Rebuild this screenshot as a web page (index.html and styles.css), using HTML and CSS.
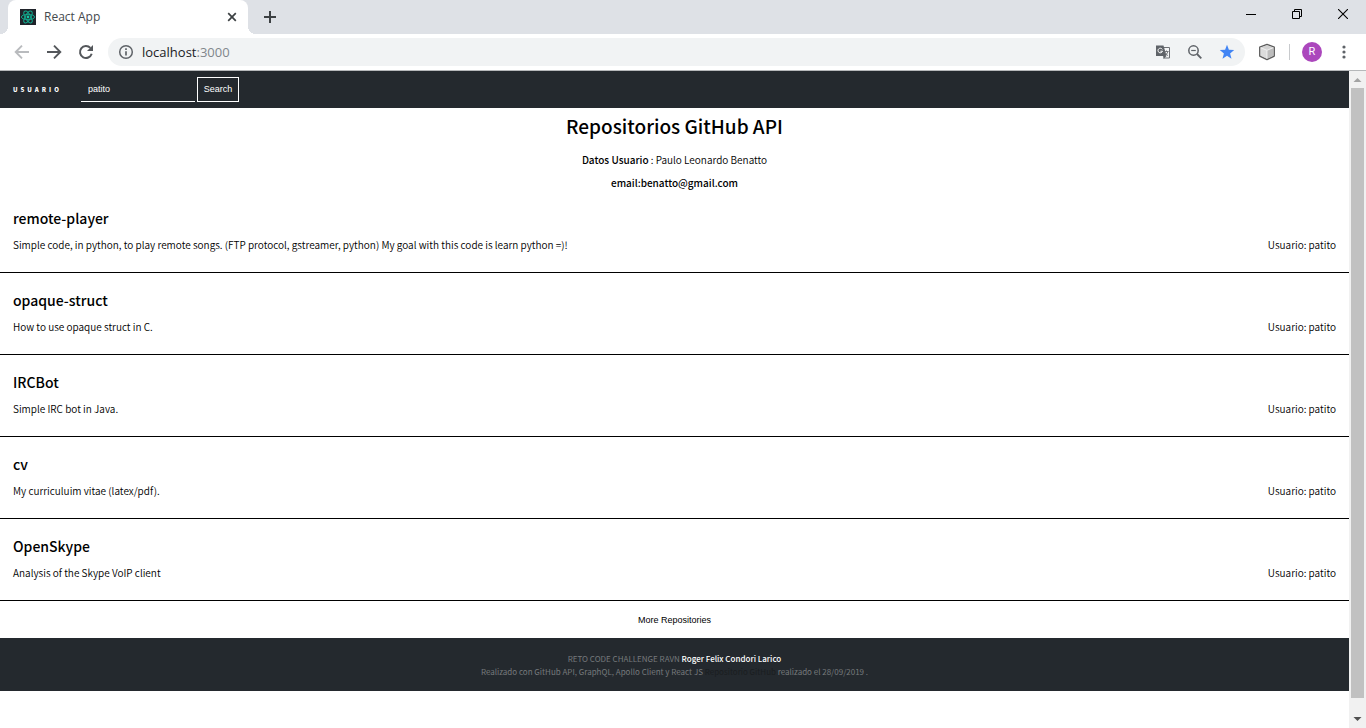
FILE: index.html
```html
<!DOCTYPE html>
<html lang="es">
<head>
<meta charset="utf-8">
<title>React App</title>
<link rel="stylesheet" href="styles.css">
</head>
<body>
<div class="browser">
  <div class="tab-strip">
    <div class="tab">
      <svg class="favicon" width="16" height="16" viewBox="0 0 16 16"><rect width="16" height="16" fill="#20232a"/><g fill="none" stroke="#12a88c" stroke-width="1"><ellipse cx="8" cy="8" rx="6.6" ry="2.7"/><ellipse cx="8" cy="8" rx="6.6" ry="2.7" transform="rotate(60 8 8)"/><ellipse cx="8" cy="8" rx="6.6" ry="2.7" transform="rotate(120 8 8)"/></g><circle cx="8" cy="8" r="1.4" fill="#14c9a5"/></svg>
      <span class="tab-title">React App</span>
      <button class="icon-button" aria-label="Close tab"><svg width="10" height="10" viewBox="0 0 10 10"><path d="M1.2 1.2l7.6 7.6M8.8 1.2L1.2 8.8" stroke="#3c4043" stroke-width="1.7"/></svg></button>
    </div>
    <button class="icon-button new-tab" aria-label="New tab"><svg width="12" height="12" viewBox="0 0 12 12"><path d="M6 0v12M0 6h12" stroke="#3c4043" stroke-width="2"/></svg></button>
    <div class="window-controls">
      <button class="icon-button" aria-label="Minimize"><svg width="10" height="10" viewBox="0 0 10 10"><path d="M0 5.5h10" stroke="#000"/></svg></button>
      <button class="icon-button" aria-label="Restore"><svg width="10" height="10" viewBox="0 0 10 10"><path d="M.5 2.5h7v7h-7zM2.5 2.5v-2h7v7h-2" fill="none" stroke="#000"/></svg></button>
      <button class="icon-button" aria-label="Close"><svg width="10" height="10" viewBox="0 0 10 10"><path d="M0 0l10 10M10 0L0 10" stroke="#000" stroke-width="1.1"/></svg></button>
    </div>
  </div>
  <div class="toolbar">
    <div class="nav-buttons">
      <button class="icon-button" aria-label="Back"><svg width="16" height="16" viewBox="0 0 16 16"><path d="M15 8H2.5M8 1.7L1.7 8 8 14.3" fill="none" stroke="#b9bbbe" stroke-width="1.9"/></svg></button>
      <button class="icon-button" aria-label="Forward"><svg width="16" height="16" viewBox="0 0 16 16"><path d="M1 8h12.500M8 1.700L14.300 8 8 14.300" fill="none" stroke="#54575b" stroke-width="1.900"/></svg></button>
      <button class="icon-button" aria-label="Reload"><svg width="16" height="16" viewBox="0 0 16 16"><path d="M13.700 9.800A6 6 0 1 1 12.400 3.900" fill="none" stroke="#54575b" stroke-width="2"/><path d="M15 1v6H9z" fill="#54575b"/></svg></button>
    </div>
    <div class="omnibox">
      <svg width="16" height="16" viewBox="0 0 16 16"><circle cx="8" cy="8" r="6.300" fill="none" stroke="#5f6368" stroke-width="1.500"/><path d="M8 7.200v4.300M8 4.300v1.700" stroke="#5f6368" stroke-width="1.700"/></svg>
      <span class="address">localhost<span class="port">:3000</span></span>
      <button class="icon-button" aria-label="Translate"><svg width="16" height="16" viewBox="0 0 16 16"><path d="M7 3.500h7.500v10.500H8" fill="#f4f5f6" stroke="#6d7074" stroke-width="1"/><path d="M1 1.500h7.500L11.500 12H1z" fill="#5f6368"/><path d="M7.300 5.400A2.300 2.300 0 1 0 7.500 7.200H5.400" fill="none" stroke="#fff" stroke-width="1"/><path d="M9.500 7.500h4M11.500 6.500v1M13 7.500q-.7 2.300-3 4.500M10.300 8.500q1 2 2.800 3.300" stroke="#6d7074" fill="none" stroke-width=".9"/><path d="M8 12h3.500L9 14.500z" fill="#5f6368"/></svg></button>
      <button class="icon-button" aria-label="Zoom"><svg width="16" height="16" viewBox="0 0 16 16"><circle cx="6.500" cy="6.500" r="4.700" fill="none" stroke="#5f6368" stroke-width="1.500"/><path d="M10 10l4.300 4.300" stroke="#5f6368" stroke-width="1.800"/><path d="M4.200 6.500h4.600" stroke="#5f6368" stroke-width="1.200"/></svg></button>
      <button class="icon-button" aria-label="Bookmark"><svg width="16" height="16" viewBox="0 0 16 16"><path d="M8 .8l1.900 5 5.300.3-4.100 3.400 1.400 5.300L8 11.800l-4.500 3 1.400-5.300L.8 6.100l5.300-.3z" fill="#4285f4"/></svg></button>
    </div>
    <button class="icon-button" aria-label="Extension"><svg width="18" height="18" viewBox="0 0 18 18"><path d="M9 1.300l7.300 2.800v9L9 16.700l-7.300-3.600v-9z" fill="#d8d8d8" stroke="#5c5c5c" stroke-width="1.300" stroke-linejoin="round"/><path d="M2.700 4.700L9 7.300v8.400l-6.300-3.200z" fill="#dcdcdc"/><path d="M9 7.300l6.300-2.600v7.800L9 15.700z" fill="#bdbdbd"/><path d="M2.700 4.500L9 2.200l6.300 2.300L9 7z" fill="#d2d2d2"/><path d="M2.700 4.700L9 7.300v8M9 7.300l6.300-2.600" fill="none" stroke="#f6f6f6" stroke-width=".8"/></svg></button>
    <span class="divider"></span>
    <button class="avatar" aria-label="Profile">R</button>
    <button class="icon-button" aria-label="Menu"><svg width="4" height="16" viewBox="0 0 4 16"><g fill="#5f6368"><circle cx="2" cy="3" r="1.600"/><circle cx="2" cy="8" r="1.600"/><circle cx="2" cy="13" r="1.600"/></g></svg></button>
  </div>
</div>
<div class="viewport">
  <div class="page">
    <form class="search-bar">
      <label class="search-label" for="user">USUARIO</label>
      <input class="search-input" id="user" type="text" value="patito">
      <button class="search-button" type="button">Search</button>
    </form>
    <main>
      <header class="intro">
        <h1 class="intro-title">Repositorios GitHub API</h1>
        <p class="intro-line"><b class="strong">Datos Usuario</b> : Paulo Leonardo Benatto</p>
        <p class="intro-line strong">email:benatto@gmail.com</p>
      </header>
      <article class="repo"><h2 class="repo-name">remote-player</h2><div class="repo-info"><p>Simple code, in python, to play remote songs. (FTP protocol, gstreamer, python) My goal with this code is learn python =)!</p><p>Usuario: patito</p></div></article>
      <article class="repo"><h2 class="repo-name">opaque-struct</h2><div class="repo-info"><p>How to use opaque struct in C.</p><p>Usuario: patito</p></div></article>
      <article class="repo"><h2 class="repo-name">IRCBot</h2><div class="repo-info"><p>Simple IRC bot in Java.</p><p>Usuario: patito</p></div></article>
      <article class="repo"><h2 class="repo-name">cv</h2><div class="repo-info"><p>My curriculuim vitae (latex/pdf).</p><p>Usuario: patito</p></div></article>
      <article class="repo"><h2 class="repo-name">OpenSkype</h2><div class="repo-info"><p>Analysis of the Skype VoIP client</p><p>Usuario: patito</p></div></article>
      <button class="more">More Repositories</button>
    </main>
    <footer class="footer">
      <p>RETO CODE CHALLENGE RAVN <a class="author" href="#">Roger Felix Condori Larico</a></p>
      <p>Realizado con GitHub API, GraphQL, Apollo Client y React JS <a class="source" href="#">Repositorio GitHub</a> realizado el 28/09/2019 .</p>
    </footer>
  </div>
  <div class="scrollbar">
    <svg width="17" height="17" viewBox="0 0 17 17"><path d="M4.500 11h8l-4-4z" fill="#a3a3a3"/></svg>
    <div class="thumb"></div>
    <svg class="scroll-down" width="17" height="17" viewBox="0 0 17 17"><path d="M4.500 6h8l-4 4z" fill="#505050"/></svg>
  </div>
</div>
</body>
</html>
```
FILE: styles.css
```css
* { box-sizing: border-box; }
body {
  margin: 0;
  height: 100vh;
  display: flex;
  flex-direction: column;
  overflow: hidden;
  background: #fff;
  color: #000;
  font: 350 10px/16px "Noto Sans CJK JP", sans-serif;
}
h1, h2, p { margin: 0; }
button { font: inherit; cursor: pointer; }
svg { display: block; flex: none; }
.icon-button { display: flex; padding: 0; border: 0; background: none; }

.browser { flex: none; font-family: "Open Sans", sans-serif; font-weight: 400; }
.tab-strip {
  display: flex;
  align-items: center;
  height: 34px;
  padding-left: 8px;
  background: #dee1e6;
}
.tab {
  position: relative;
  display: flex;
  align-items: center;
  gap: 8px;
  width: 240px;
  height: 34px;
  padding: 0 11px 0 12px;
  border-radius: 8px 8px 0 0;
  background: #fff;
}
.tab::before, .tab::after {
  content: "";
  position: absolute;
  bottom: 0;
  width: 8px;
  height: 8px;
}
.tab::before { left: -8px; background: radial-gradient(circle at 0 0, #dee1e6 8px, #fff 8px); }
.tab::after { right: -8px; background: radial-gradient(circle at 100% 0, #dee1e6 8px, #fff 8px); }
.tab-title { flex: 1; font-size: 12px; color: #45494d; }
.new-tab { margin-left: 16px; }
.window-controls { display: flex; gap: 36px; margin: 0 18px 6px auto; }
.toolbar {
  display: flex;
  align-items: center;
  height: 37px;
  padding-right: 20px;
  border-bottom: 1px solid #b6b8ba;
}
.nav-buttons { display: flex; gap: 16px; padding: 0 14px; }
.omnibox {
  flex: 1;
  display: flex;
  align-items: center;
  gap: 16px;
  height: 28px;
  margin-right: 13px;
  padding: 0 10px;
  border-radius: 14px;
  background: #f1f3f4;
}
.address { flex: 1; margin-left: -8px; font-size: 13px; color: #202124; }
.port { color: #80868b; }
.divider { width: 1px; height: 16px; margin: 0 12px 0 13px; background: #c8cacd; }
.avatar {
  width: 20px;
  height: 20px;
  margin-right: 20px;
  padding: 0;
  border: 0;
  border-radius: 50%;
  background: #ab47bc;
  color: #fff;
  font: 11px/20px Roboto, sans-serif;
}

.viewport { flex: 1; display: flex; min-height: 0; }
.page { flex: 1; overflow: hidden; }
.scrollbar { display: flex; flex-direction: column; width: 17px; background: #f1f1f1; }
.thumb { flex: 1; margin: 0 2px 13px; background: #c1c1c1; }

.search-bar {
  display: flex;
  align-items: center;
  height: 37px;
  padding: 0 13px;
  background: #24292e;
  color: #fff;
}
.search-label { width: 68px; font-size: 6px; font-weight: 900; letter-spacing: 3px; }
.search-input {
  width: 114px;
  height: 25px;
  margin-right: 2px;
  padding: 0 7px;
  border: 0;
  border-bottom: 1px solid #fff;
  background: none;
  color: #fff;
  font: 9px "Liberation Sans", Arial, sans-serif;
}
.search-button {
  width: 42px;
  height: 25px;
  padding: 0 0 2px;
  border: 1px solid #fff;
  background: none;
  color: #fff;
  font: 9px "Liberation Sans", Arial, sans-serif;
}

.intro { padding: 4px 13px 0; text-align: center; }
.intro-title { margin-bottom: 12px; font-size: 19px; line-height: 28px; font-weight: 500; }
.intro-line + .intro-line { margin-top: 7px; }
.strong { font-weight: 500; }
.repo { height: 82px; padding: 16px 13px 0; border-bottom: 1px solid #000; }
.repo-name { margin-bottom: 8px; font-size: 14px; line-height: 22px; font-weight: 500; }
.repo-info { display: flex; justify-content: space-between; gap: 16px; }
.more {
  display: block;
  width: 100%;
  height: 37px;
  padding: 0;
  border: 0;
  background: none;
  font: 9px "Liberation Sans", Arial, sans-serif;
}
.footer {
  padding: 14px 13px 13px;
  background: #24292e;
  color: #76797c;
  text-align: center;
  font-size: 8px;
  line-height: 13px;
  font-weight: 400;
}
.footer a { text-decoration: none; }
.author { color: #fff; font-weight: 500; }
.source { color: #1a1d20; }
```
